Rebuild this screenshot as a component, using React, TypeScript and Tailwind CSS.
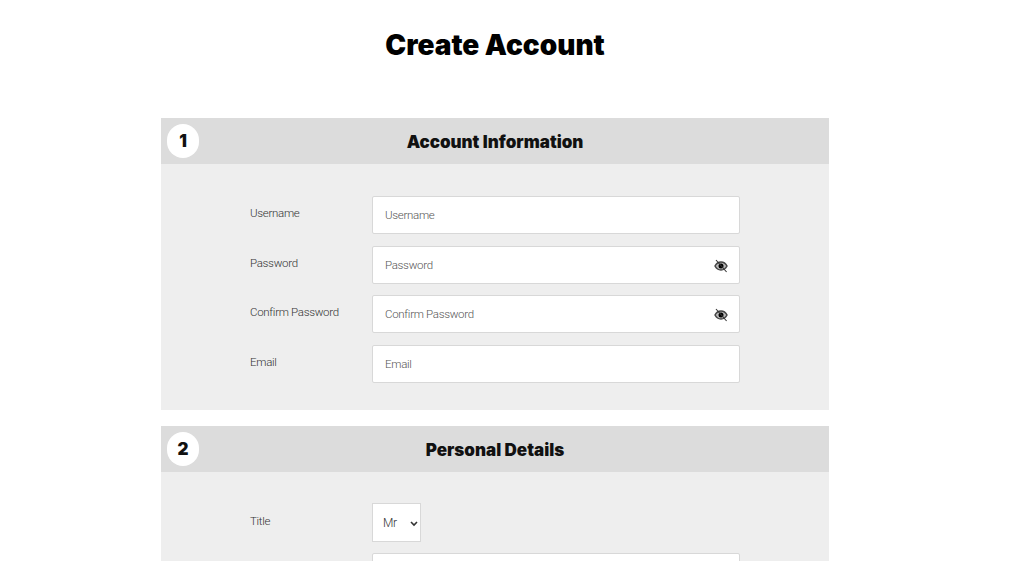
const LABEL_FONT = "font-['Roboto',sans-serif] font-light tracking-[-0.3px]";
const HEADING_FONT = "font-['Inter',sans-serif]";

function EyeSlash() {
  return (
    <svg width="14" height="14" viewBox="0 0 14 14" fill="none" className="mt-[2px] shrink-0">
      <path d="M1 7C2.5 4.2 4.5 3 7 3S11.5 4.2 13 7C11.5 9.8 9.5 11 7 11S2.5 9.8 1 7Z" fill="#bbb" stroke="#444" strokeWidth="1.5" />
      <circle cx="7" cy="7" r="2.5" fill="#000" />
      <path d="M2 1L12.6 13" stroke="#333" strokeWidth="1.1" />
    </svg>
  );
}

function Field({ label, eye, gap }: { label: string; eye?: boolean; gap: string }) {
  return (
    <div className={`flex ${gap}`}>
      <label className={`w-[122px] pt-[9px] text-[11.5px] leading-[17px] text-[#333] ${LABEL_FONT}`}>{label}</label>
      <div className="flex h-[38px] w-[368px] items-center justify-between rounded-[2px] border border-[#d8d8d8] bg-white pl-[12px] pr-[11px]">
        <span className={`pt-[1px] text-[11.5px] text-[#555] ${LABEL_FONT}`}>{label}</span>
        {eye && <EyeSlash />}
      </div>
    </div>
  );
}

function SectionHeader({ n, title }: { n: number; title: string }) {
  return (
    <div className="relative flex h-[46px] items-center justify-center bg-[#dcdcdc] pt-[3px]">
      <div className={`absolute left-[6px] top-[6px] flex h-[34px] w-[32px] items-center justify-center rounded-full bg-white pt-[2px] text-[17px] font-black text-[#111] ${HEADING_FONT}`}>
        {n}
      </div>
      <h2 className={`text-[17px] font-black text-[#111] ${HEADING_FONT}`}>{title}</h2>
    </div>
  );
}

export default function App() {
  return (
    <div className="h-[561px] overflow-hidden bg-white">
      <div className="ml-[161px] w-[668px]">
        <h1 className={`pt-[27px] text-center text-[28px] leading-[36px] font-black text-black ${HEADING_FONT}`}>
          Create Account
        </h1>
        <section className="mt-[55px]">
          <SectionHeader n={1} title="Account Information" />
          <div className="h-[246px] bg-[#eeeeee] pl-[89px] pt-[32px]">
            <Field label="Username" gap="mb-3" />
            <Field label="Password" eye gap="mb-[11px]" />
            <Field label="Confirm Password" eye gap="mb-3" />
            <Field label="Email" gap="" />
          </div>
        </section>
        <section className="mt-4">
          <SectionHeader n={2} title="Personal Details" />
          <div className="bg-[#eeeeee] pl-[89px] pt-[31px] pb-8">
            <div className="mb-[11px] flex">
              <label className={`w-[122px] pt-[10px] text-[11.5px] leading-[17px] text-[#333] ${LABEL_FONT}`}>Title</label>
              <div className="relative h-[39px] w-[49px]">
                <select className={`h-full w-full appearance-none border border-[#d8d8d8] bg-white pl-[10px] text-[12px] text-[#333] ${LABEL_FONT}`}>
                  <option>Mr</option>
                </select>
                <svg width="8" height="6" viewBox="0 0 8 6" fill="none" className="pointer-events-none absolute left-[38px] top-[18px]">
                  <path d="M1 1L4 4L7 1" stroke="#333" strokeWidth="1.6" />
                </svg>
              </div>
            </div>
            <div className="ml-[122px] h-[38px] w-[368px] rounded-[2px] border border-[#d8d8d8] bg-white" />
          </div>
        </section>
      </div>
    </div>
  );
}
